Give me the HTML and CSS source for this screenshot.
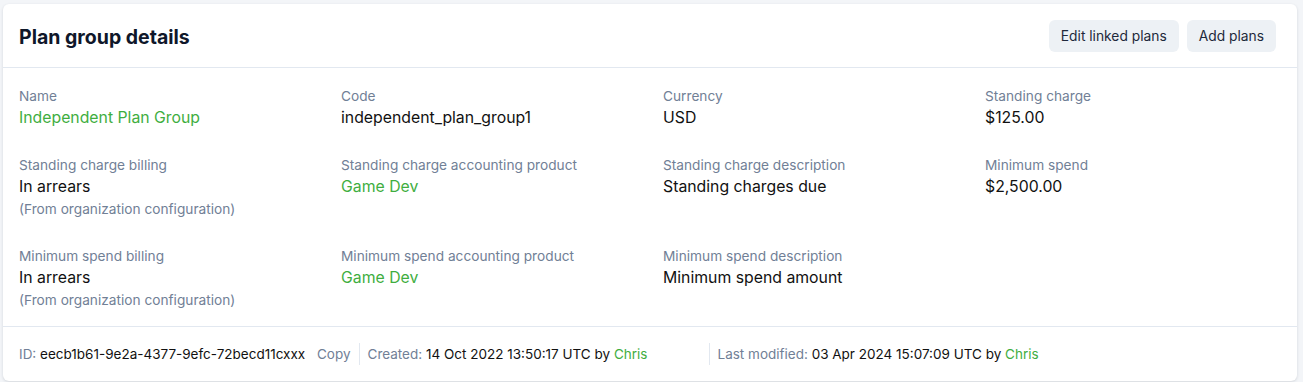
FILE: index.html
```html
<!DOCTYPE html>
<html lang="en">
<head>
  <meta charset="UTF-8">
  <meta name="viewport" content="width=device-width, initial-scale=1.0">
  <title>Plan group details</title>
  <link rel="stylesheet" href="styles.css">
</head>
<body>
  <div class="card">
    <div class="card-header">
      <h2 class="title">Plan group details</h2>
      <div class="actions">
        <button class="btn">Edit linked plans</button>
        <button class="btn">Add plans</button>
      </div>
    </div>

    <div class="details">
      <div class="field">
        <div class="label">Name</div>
        <div class="value link">Independent Plan Group</div>
      </div>
      <div class="field">
        <div class="label">Code</div>
        <div class="value">independent_plan_group1</div>
      </div>
      <div class="field">
        <div class="label">Currency</div>
        <div class="value">USD</div>
      </div>
      <div class="field">
        <div class="label">Standing charge</div>
        <div class="value">$125.00</div>
      </div>

      <div class="field">
        <div class="label">Standing charge billing</div>
        <div class="value">In arrears</div>
        <div class="note">(From organization configuration)</div>
      </div>
      <div class="field">
        <div class="label">Standing charge accounting product</div>
        <div class="value link">Game Dev</div>
      </div>
      <div class="field">
        <div class="label">Standing charge description</div>
        <div class="value">Standing charges due</div>
      </div>
      <div class="field">
        <div class="label">Minimum spend</div>
        <div class="value">$2,500.00</div>
      </div>

      <div class="field">
        <div class="label">Minimum spend billing</div>
        <div class="value">In arrears</div>
        <div class="note">(From organization configuration)</div>
      </div>
      <div class="field">
        <div class="label">Minimum spend accounting product</div>
        <div class="value link">Game Dev</div>
      </div>
      <div class="field">
        <div class="label">Minimum spend description</div>
        <div class="value">Minimum spend amount</div>
      </div>
    </div>

    <div class="card-footer">
      <div class="meta meta-id">
        <span class="muted">ID:</span> eecb1b61-9e2a-4377-9efc-72becd11cxxx
        <span class="muted copy">Copy</span>
      </div>
      <div class="meta meta-created">
        <span class="muted">Created:</span> 14 Oct 2022 13:50:17 UTC by <span class="link">Chris</span>
      </div>
      <div class="meta">
        <span class="muted">Last modified:</span> 03 Apr 2024 15:07:09 UTC by <span class="link">Chris</span>
      </div>
    </div>
  </div>
</body>
</html>
```

FILE: styles.css
```css
body {
  margin: 0;
  padding: 4px 6px 3px 3px;
  background-color: #f3f5f8;
  color: #111827;
  font-family: Inter, 'Liberation Sans', sans-serif;
}
.card {
  background-color: white;
  border-radius: 6px;
  box-shadow: 0 1px 3px rgba(30, 41, 59, 0.15);
}
.card-header {
  display: flex;
  align-items: center;
  justify-content: space-between;
  height: 64px;
  padding: 0 21px 0 16px;
  border-bottom: 1px solid #e2e8f0;
  box-sizing: border-box;
}
.title {
  margin: 0;
  padding-top: 3px;
  font-size: 19.5px;
  font-weight: 700;
  color: #0f172a;
}
.actions {
  display: flex;
  gap: 8px;
}
.btn {
  height: 32px;
  padding: 0 12px;
  border: none;
  border-radius: 6px;
  background-color: #edf1f5;
  color: #1e293b;
  font-family: inherit;
  font-size: 13.8px;
  cursor: pointer;
}
.details {
  display: grid;
  grid-template-columns: repeat(4, 1fr);
  column-gap: 26px;
  row-gap: 26px;
  padding: 18px 16px 15px 16px;
  border-bottom: 1px solid #e2e8f0;
}
.label {
  font-size: 13.7px;
  line-height: 20px;
  color: #718096;
}
.value {
  margin-top: 1px;
  font-size: 15.8px;
  line-height: 22px;
  color: #111;
}
.note {
  font-size: 13.7px;
  line-height: 22px;
  color: #718096;
}
.link {
  color: #3fae3f;
}
.card-footer {
  display: flex;
  align-items: center;
  height: 54px;
  padding: 0 16px;
  font-size: 13.5px;
  color: #111;
}
.meta {
  padding: 0 8px;
  border-left: 1px solid #e2e8f0;
  line-height: 22px;
}
.meta-id {
  padding-left: 0;
  border-left: none;
}
.meta-created {
  width: 333px;
}
.muted {
  color: #718096;
}
.copy {
  margin-left: 8px;
}
```
